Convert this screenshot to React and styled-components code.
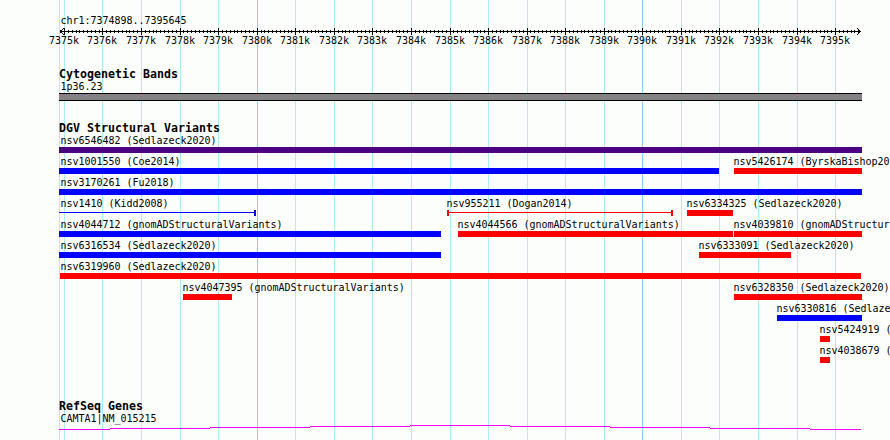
import React from 'react'
import styled, { createGlobalStyle } from 'styled-components'

const LEFT = 59
const RIGHT = 862
const START = 7374898
const SCALE = 800 / 20748

const toX = (bp) => Math.round(60 + (bp - START) * SCALE)

const majors = Array.from({ length: 21 }, (_, i) => 7375000 + i * 1000)
const minors = Array.from({ length: 208 }, (_, i) => 7374900 + i * 100)

const red = '#ff0000'
const blue = '#0000ff'
const indigo = '#4b0082'

const rows = [
  [{ name: 'nsv6546482 (Sedlazeck2020)', from: 59, to: 862, color: indigo }],
  [
    { name: 'nsv1001550 (Coe2014)', from: 59, to: 719, color: blue },
    { name: 'nsv5426174 (ByrskaBishop20', from: 734, to: 862, color: red },
  ],
  [{ name: 'nsv3170261 (Fu2018)', from: 59, to: 862, color: blue }],
  [
    { name: 'nsv1410 (Kidd2008)', from: 59, to: 256, color: blue, span: 'right' },
    { name: 'nsv955211 (Dogan2014)', from: 447, to: 673, color: red, span: 'both' },
    { name: 'nsv6334325 (Sedlazeck2020)', from: 687, to: 733, color: red },
  ],
  [
    { name: 'nsv4044712 (gnomADStructuralVariants)', from: 59, to: 441, color: blue },
    { name: 'nsv4044566 (gnomADStructuralVariants)', from: 458, to: 733, color: red },
    { name: 'nsv4039810 (gnomADStructur', from: 734, to: 862, color: red },
  ],
  [
    { name: 'nsv6316534 (Sedlazeck2020)', from: 59, to: 441, color: blue },
    { name: 'nsv6333091 (Sedlazeck2020)', from: 699, to: 791, color: red },
  ],
  [{ name: 'nsv6319960 (Sedlazeck2020)', from: 60, to: 861, color: red }],
  [
    { name: 'nsv4047395 (gnomADStructuralVariants)', from: 183, to: 232, color: red },
    { name: 'nsv6328350 (Sedlazeck2020)', from: 734, to: 862, color: red },
  ],
  [{ name: 'nsv6330816 (Sedlaze', from: 777, to: 862, color: blue }],
  [{ name: 'nsv5424919 (', from: 820, to: 830, color: red }],
  [{ name: 'nsv4038679 (', from: 820, to: 830, color: red }],
]

export default function App() {
  return (
    <>
      <GlobalStyle />
      <Page>
        <Grid width="890" height="440" shapeRendering="crispEdges">
          <rect x={LEFT} width="1" height="440" fill="#afeeee" />
          {majors.map((bp) => (
            <rect
              key={bp}
              x={toX(bp)}
              width="1"
              height="440"
              fill={bp % 10000 === 0 ? '#87ceeb' : '#afeeee'}
            />
          ))}
        </Grid>
        <Overview>
          <Label>chr1:7374898..7395645</Label>
          <Ruler />
        </Overview>
        <Track $height={54}>
          <TrackTitle>Cytogenetic Bands</TrackTitle>
          <Label>1p36.23</Label>
          <Band />
        </Track>
        <Track $height={278}>
          <TrackTitle>DGV Structural Variants</TrackTitle>
          {rows.map((row, i) => (
            <Row key={i}>
              {row.map((item, j) => (
                <Variant key={item.name} item={item} after={j ? row[j - 1].to : LEFT} />
              ))}
            </Row>
          ))}
        </Track>
        <Track $height={40}>
          <TrackTitle>RefSeq Genes</TrackTitle>
          <Label>CAMTA1|NM_015215</Label>
          <Gene />
        </Track>
      </Page>
    </>
  )
}

function Variant({ item, after }) {
  return (
    <Feature $gap={item.from - after} $width={item.to - item.from}>
      <Label $shift={item.from > 60 ? -0.4 : 60.6 - item.from}>{item.name}</Label>
      {item.span ? <Span $color={item.color} $ends={item.span} /> : <Bar $color={item.color} />}
    </Feature>
  )
}

function Ruler() {
  return (
    <RulerSvg width="890" height="20" shapeRendering="crispEdges">
      <rect x="60" y="3" width="801" height="1" />
      {minors.map((bp) => (
        <rect key={bp} x={toX(bp)} y="2" width="1" height="3" />
      ))}
      {majors.map((bp) => (
        <g key={bp}>
          <rect x={toX(bp)} y="0" width="1" height="7" />
          <text x={toX(bp) - 15} y="16">
            {bp / 1000}k
          </text>
        </g>
      ))}
      {[1, 2, 3].map((n) => (
        <g key={n}>
          <rect x={60 + n} y={3 - n} width="1" height="1" />
          <rect x={60 + n} y={3 + n} width="1" height="1" />
          <rect x={860 - n} y={3 - n} width="1" height="1" />
          <rect x={860 - n} y={3 + n} width="1" height="1" />
        </g>
      ))}
    </RulerSvg>
  )
}

// the gene line rises one pixel per 100 up to the middle, then falls back
function Gene() {
  const edges = [59, 110, 210, 310, 410, 510, 610, 710, 810, 861]
  return (
    <GeneSvg width="890" height="5" shapeRendering="crispEdges">
      {edges.slice(0, -1).map((x, i) => (
        <rect key={x} x={x} y={Math.abs(4 - i)} width={edges[i + 1] - x} height="1" fill="#ff00ff" />
      ))}
    </GeneSvg>
  )
}

const GlobalStyle = createGlobalStyle`
  body {
    margin: 0;
    background: #fcfefc;
  }
`

const Page = styled.main`
  position: relative;
  display: flex;
  flex-direction: column;
  box-sizing: border-box;
  width: 890px;
  height: 440px;
  padding: 15px 0 0 ${LEFT}px;
  overflow: hidden;
  background: #fcfefc;
  color: #000;
  font-family: 'DejaVu Sans Mono', monospace;
  font-size: 10px;
  letter-spacing: -0.02px;
`

const Grid = styled.svg`
  position: absolute;
  top: 0;
  left: 0;
`

const Overview = styled.header`
  z-index: 1;
  display: flex;
  flex-direction: column;
  height: 53px;
`

const Label = styled.span`
  display: block;
  flex: none;
  height: 12px;
  margin-left: ${(p) => p.$shift ?? 1.6}px;
  line-height: 12px;
  white-space: pre;
`

const RulerSvg = styled.svg`
  display: block;
  flex: none;
  margin: 1px 0 0 -${LEFT}px;
`

const Track = styled.section`
  z-index: 1;
  display: flex;
  flex: none;
  flex-direction: column;
  height: ${(p) => p.$height}px;
`

const TrackTitle = styled.h2`
  flex: none;
  height: 13px;
  margin: 0;
  font-size: 11.6px;
  font-weight: bold;
  line-height: 13px;
  letter-spacing: 0.016px;
  white-space: pre;
`

const Band = styled.div`
  box-sizing: border-box;
  width: ${RIGHT - LEFT}px;
  height: 8px;
  border: solid #000;
  border-width: 1px 0;
  background: #848284;
`

const Row = styled.div`
  display: flex;
  flex: none;
  height: 21px;
`

const Feature = styled.div`
  display: flex;
  flex: none;
  flex-direction: column;
  width: ${(p) => p.$width}px;
  margin-left: ${(p) => p.$gap}px;
`

const Bar = styled.div`
  height: 6px;
  background: ${(p) => p.$color};
`

const Span = styled.div`
  box-sizing: border-box;
  height: 6px;
  border: solid ${(p) => p.$color};
  border-width: 0 ${(p) => (p.$ends === 'both' ? '2px 0 2px' : '2px 0 0')};
  background: linear-gradient(${(p) => p.$color}, ${(p) => p.$color}) 0 2px / 100% 1px no-repeat;
`

const GeneSvg = styled.svg`
  display: block;
  flex: none;
  margin-left: -${LEFT}px;
`
